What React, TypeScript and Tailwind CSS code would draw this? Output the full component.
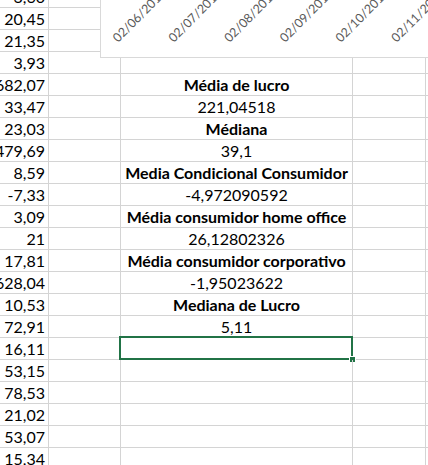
import React from "react";

const colA = [
  "3,60", "20,45", "21,35", "3,93", "1682,07", "33,47", "23,03", "1479,69",
  "8,59", "-7,33", "3,09", "21", "17,81", "1628,04", "10,53", "72,91",
  "16,11", "53,15", "78,53", "21,02", "53,07", "15,34",
];

const colC: Record<number, { t: string; b?: boolean }> = {
  4: { t: "Média de lucro", b: true },
  5: { t: "221,04518" },
  6: { t: "Médiana", b: true },
  7: { t: "39,1" },
  8: { t: "Media Condicional Consumidor", b: true },
  9: { t: "-4,972090592" },
  10: { t: "Média consumidor home office", b: true },
  11: { t: "26,12802326" },
  12: { t: "Média consumidor corporativo", b: true },
  13: { t: "-1,95023622" },
  14: { t: "Mediana de Lucro", b: true },
  15: { t: "5,11" },
};

const dates = ["02/06/2013", "02/07/2013", "02/08/2013", "02/09/2013", "02/10/2013", "02/11/2013"];

export default function App() {
  return (
    <div
      className="relative w-[428px] h-[465px] overflow-hidden bg-white text-black"
      style={{ fontFamily: "Lato, 'Open Sans', sans-serif" }}
    >
      <div className="-mt-[14px] flex flex-col">
        {colA.map((a, i) => {
          const c = colC[i];
          return (
            <div key={i} className="flex h-[22px] shrink-0 text-[16px] leading-[21px]">
              <div className="w-[80px] -ml-[31px] shrink-0 border-r border-b border-[#d4d4d4] text-right pr-[3px] whitespace-nowrap overflow-hidden">
                {a}
              </div>
              <div className="w-[72px] shrink-0 border-r border-b border-[#d4d4d4]" />
              <div
                className={`relative w-[232px] shrink-0 border-r border-b border-[#d4d4d4] text-center whitespace-nowrap ${
                  c?.b ? "font-bold" : ""
                }`}
              >
                {c?.t ?? ""}
                {i === 16 && (
                  <>
                    <div className="absolute -top-[2px] -left-[2px] -right-[1px] -bottom-[1px] border-2 border-[#217346]" />
                    <div className="absolute left-[228px] top-[18px] w-[7px] h-[7px] bg-white p-[1px]">
                      <div className="w-[5px] h-[5px] bg-[#217346]" />
                    </div>
                  </>
                )}
              </div>
              <div className="w-[73px] shrink-0 border-r border-b border-[#d4d4d4]" />
              <div className="w-[60px] shrink-0 border-r border-b border-[#d4d4d4]" />
            </div>
          );
        })}
      </div>

      {/* chart overlay */}
      <div className="absolute left-[100px] top-[-20px] w-[400px] h-[78px] bg-white border-l border-b border-[#d9d9d9]">
        <svg width="400" height="77" className="absolute left-0 top-0">
          {dates.map((d, k) => {
            const x = 17 + 55.7 * k;
            const y = 63;
            return (
              <text
                key={d}
                x={x}
                y={y}
                transform={`rotate(-45 ${x} ${y})`}
                fill="#595959"
                fontSize="12.5"
                fontFamily="Lato, 'Open Sans', sans-serif"
              >
                {d}
              </text>
            );
          })}
        </svg>
      </div>
    </div>
  );
}
